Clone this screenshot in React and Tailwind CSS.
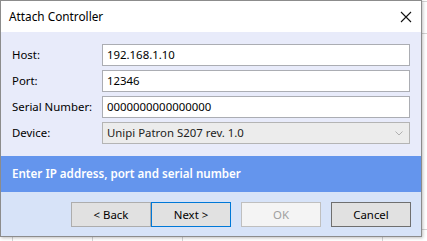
import React from 'react';

const fields = [
  { label: 'Host:', value: '192.168.1.10' },
  { label: 'Port:', value: '12346' },
  { label: 'Serial Number:', value: '0000000000000000' },
];

const App = () => {
  return (
    <div className="relative w-[427px] h-[241px] overflow-hidden bg-white font-['Noto_Sans',sans-serif] text-[11.4px] text-black">
      {/* sheet grid behind the dialog */}
      <div className="absolute left-[12px] top-0 h-full w-px bg-[#d4d4d4]" />
      <div className="absolute left-[92px] top-0 h-full w-px bg-[#d4d4d4]" />
      <div className="absolute left-[182px] top-0 h-full w-px bg-[#d4d4d4]" />
      <div className="absolute left-[382px] top-0 h-full w-px bg-[#d4d4d4]" />
      <div className="absolute left-0 top-[1px] w-full h-px bg-[#d4d4d4]" />
      <div className="absolute left-0 top-[33px] w-full h-px bg-[#d4d4d4]" />
      <div className="absolute left-0 top-[229px] w-full h-px bg-[#d4d4d4]" />

      {/* dialog */}
      <div className="absolute left-0 top-0 w-[422px] h-[237px] flex flex-col border border-[#8c8c8c] bg-white shadow-[1px_1px_3px_rgba(0,0,0,0.25)]">
        {/* Title bar */}
        <div className="h-[31px] flex items-center justify-between pl-[8px] pr-[9px] bg-white">
          <span className="leading-none text-[11.8px]">Attach Controller</span>
          <svg width="12" height="12" viewBox="0 0 12 12" className="text-[#111]">
            <path d="M1 1 L11 11 M11 1 L1 11" stroke="currentColor" strokeWidth="1.1" fill="none" />
          </svg>
        </div>

        {/* Form */}
        <div className="h-[124px] bg-[#e8ebfa] pt-[12px] pl-[11px] pr-[11px] flex flex-col gap-[4px]">
          {fields.map((f) => (
            <div key={f.label} className="flex items-center h-[22px]">
              <span className="w-[90px] shrink-0">{f.label}</span>
              <div className="flex-1 h-[22px] flex items-center px-[4px] bg-white border border-[#abadb3]">
                {f.value}
              </div>
            </div>
          ))}
          <div className="flex items-center h-[22px]">
            <span className="w-[90px] shrink-0">Device:</span>
            <div className="flex-1 h-[22px] flex items-center justify-between px-[4px] bg-[#ececec] border border-[#b4b4b4] text-[#222]">
              <span>Unipi Patron S207 rev. 1.0</span>
              <svg width="8" height="5" viewBox="0 0 8 5" className="mr-[2px]">
                <path d="M0.5 0.5 L4 4 L7.5 0.5" stroke="#b0b0b0" strokeWidth="1" fill="none" />
              </svg>
            </div>
          </div>
        </div>

        {/* Hint band */}
        <div className="h-[36px] bg-[#6495ed] flex items-center pl-[11px] text-white font-semibold text-[11.6px]">
          Enter IP address, port and serial number
        </div>

        {/* Buttons */}
        <div className="flex-1 bg-[#d7e3f8] pt-[10px] pr-[10px] flex justify-end items-start">
          <button className="w-[80px] h-[25px] bg-[#e1e1e1] border border-[#adadad]">&lt; Back</button>
          <button className="w-[80px] h-[25px] bg-[#e1e1e1] border border-[#0078d7]">Next &gt;</button>
          <button className="ml-[10px] w-[80px] h-[25px] bg-[#f4f4f4] border border-[#bfbfbf] text-[#a0a0a0]">OK</button>
          <button className="ml-[10px] w-[80px] h-[25px] bg-[#e1e1e1] border border-[#6f6f6f]">Cancel</button>
        </div>
      </div>
    </div>
  );
};

export default App;
